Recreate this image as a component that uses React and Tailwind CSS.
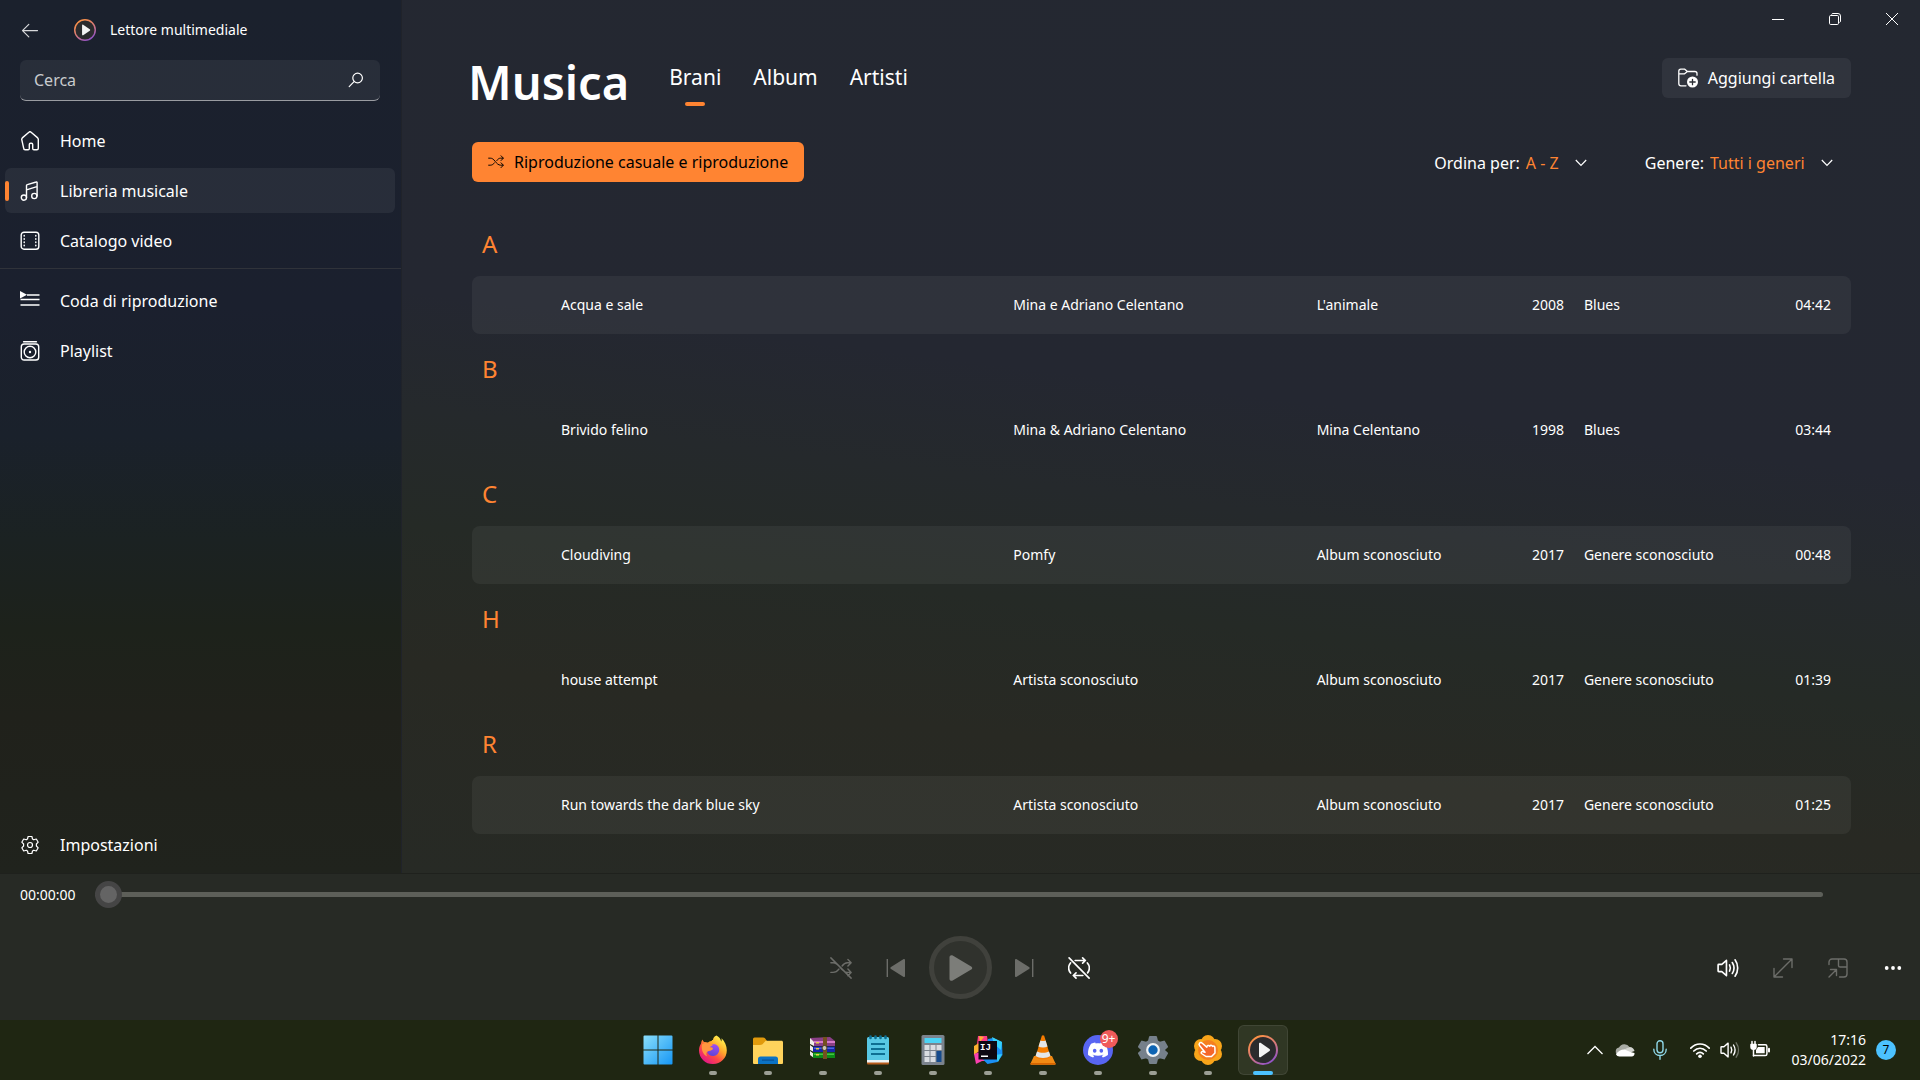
import React from "react";
import { SiDiscord } from "react-icons/si";

const songs = [
  { letter: "A", title: "Acqua e sale", artist: "Mina e Adriano Celentano", album: "L'animale", year: "2008", genre: "Blues", time: "04:42", card: true },
  { letter: "B", title: "Brivido felino", artist: "Mina & Adriano Celentano", album: "Mina Celentano", year: "1998", genre: "Blues", time: "03:44", card: false },
  { letter: "C", title: "Cloudiving", artist: "Pomfy", album: "Album sconosciuto", year: "2017", genre: "Genere sconosciuto", time: "00:48", card: true },
  { letter: "H", title: "house attempt", artist: "Artista sconosciuto", album: "Album sconosciuto", year: "2017", genre: "Genere sconosciuto", time: "01:39", card: false },
  { letter: "R", title: "Run towards the dark blue sky", artist: "Artista sconosciuto", album: "Album sconosciuto", year: "2017", genre: "Genere sconosciuto", time: "01:25", card: true },
];

function Line({ children, size = 20, width = 1.4, className = "" }) {
  return (
    <svg
      width={size}
      height={size}
      viewBox="0 0 20 20"
      fill="none"
      stroke="currentColor"
      strokeWidth={width}
      strokeLinecap="round"
      strokeLinejoin="round"
      className={"shrink-0 " + className}
      aria-hidden="true"
    >
      {children}
    </svg>
  );
}

const HomeIcon = () => (
  <Line>
    <path d="M1.7 8.3c0-.6.2-1 .6-1.4l6.6-5.7c.6-.6 1.5-.6 2.2 0l6.600 5.700c.4.4.6.8.6 1.400v9c0 .8-.6 1.500-1.400 1.500h-3c-.7 0-1.200-.5-1.200-1.200v-4c0-.8-.5-1.300-1.200-1.300h-1c-.7 0-1.200.5-1.200 1.300v4c0 .7-.5 1.200-1.200 1.200h-3c-.8 0-1.400-.7-1.400-1.500z" />
  </Line>
);
const MusicIcon = () => (
  <Line>
    <circle cx="3.9" cy="16.6" r="2.6" />
    <circle cx="14.3" cy="15" r="2.6" />
    <path d="M6.5 16.6V4.6c0-.5.3-.9.8-1L16.2 1c.5-.2.9.1.9.6V15M6.5 8.8l10.4-3.1" />
  </Line>
);
const FilmIcon = () => (
  <Line>
    <rect x="1.2" y="1.2" width="17.6" height="17" rx="2.8" />
    <path d="M4.200 4.500v.6M4.200 7.700v.6M4.200 11v.6M4.200 14.200v.6M15.800 4.500v.6M15.800 7.700v.6M15.800 11v.6M15.800 14.200v.6" strokeWidth="1.500" />
  </Line>
);
const QueueIcon = () => (
  <Line width={1.5}>
    <path d="M0 0l7 3.7L0 7.4z" fill="currentColor" stroke="none" />
    <path d="M7 4h12.5M.5 8.6h19M.5 14h19" strokeLinecap="butt" />
  </Line>
);
const PlaylistIcon = () => (
  <Line>
    <path d="M3.6.8h12.8" />
    <rect x="1.3" y="3" width="17.4" height="16" rx="2.8" />
    <circle cx="10" cy="11" r="5.8" />
    <circle cx="10" cy="11" r="1.2" fill="currentColor" stroke="none" />
  </Line>
);
const GearIcon = () => (
  <Line width={1.2}>
    <path d="M8.1 1.5h3.8l.6 2.5 1.3.8 2.5-.8 1.9 3.2-1.8 1.8v2l1.8 1.8-1.9 3.2-2.5-.8-1.3.8-.6 2.5H8.1L7.500 16l-1.300-.8-2.500.8-1.900-3.200L3.600 11V9L1.800 7.200 3.700 4l2.500.8L7.500 4z" />
    <circle cx="10" cy="10" r="2.5" />
  </Line>
);

function Disc({ size }) {
  const id = "ring" + size;
  return (
    <svg width={size} height={size} viewBox="0 0 30 30" className="shrink-0" aria-hidden="true">
      <defs>
        <linearGradient id={id} x1="0.2" y1="0" x2="0.8" y2="1">
          <stop offset="0" stopColor="#ff9440" />
          <stop offset="0.5" stopColor="#d97a78" />
          <stop offset="1" stopColor="#8a4fd0" />
        </linearGradient>
      </defs>
      <circle cx="15" cy="15" r="14" fill="#2b2b2d" stroke={"url(#" + id + ")"} strokeWidth="2" />
      <path d="M11 8.700c0-.9.800-1.300 1.500-.9l9 6.200c.7.500.7 1.500 0 2l-9 6.200c-.7.400-1.500 0-1.500-.9z" fill="#f4f4f4" />
    </svg>
  );
}

function NavItem({ icon, label, active }) {
  return (
    <a
      href="#"
      aria-current={active ? "page" : undefined}
      className={
        "relative mr-1.5 ml-[5px] flex h-[45px] items-center gap-5 rounded-md pl-[15px] text-base text-white " +
        (active ? "bg-white/6" : "")
      }
    >
      {active && <span className="absolute left-0 h-5 w-1 rounded-full bg-[#ff8432]" />}
      {icon}
      <span>{label}</span>
    </a>
  );
}

function Filter({ id, label, value }) {
  return (
    <div className="relative flex items-center">
      <label htmlFor={id} className="text-white">{label}</label>
      <select id={id} className="cursor-pointer appearance-none bg-transparent pr-10 pl-1.5 text-[#ff8432] outline-none">
        <option>{value}</option>
      </select>
      <svg width="12" height="8" viewBox="0 0 12 8" className="pointer-events-none absolute right-3" fill="none" stroke="#fff" strokeWidth="1.2" aria-hidden="true">
        <path d="M.8 1L6 6.500 11.200 1" />
      </svg>
    </div>
  );
}

function Sidebar() {
  return (
    <aside className="flex w-[402px] shrink-0 flex-col border-r border-[#20232a] bg-[linear-gradient(180deg,#1b212d_0%,#1b202e_35%,#1a212b_50%,#1b2222_62%,#1d221b_72%,#20211b_82%,#20231d_100%)]">
      <div className="flex h-[60px] items-center pl-5">
        <button type="button" aria-label="Indietro" className="text-[#d8d9db]">
          <Line width={1.200}>
            <path d="M2.500 10.600h15M8.800 4.300l-6.300 6.300 6.300 6.300" />
          </Line>
        </button>
        <span className="ml-[34px] flex items-center gap-3.5 text-sm text-white">
          <Disc size={22} />
          Lettore multimediale
        </span>
      </div>
      <div className="mr-[21px] mb-[17px] ml-5 flex h-[41px] items-center rounded-md border-b border-[#9a9ca1] bg-white/6 pr-4 pl-3.5">
        <input
          type="text"
          aria-label="Cerca"
          placeholder="Cerca"
          className="min-w-0 flex-1 bg-transparent text-base text-white outline-none placeholder:text-[#c9cbce]"
        />
        <Line size={16} width={1.500} className="text-white">
          <circle cx="12" cy="7.500" r="6" />
          <path d="M7.600 12L1.500 18.200" />
        </Line>
      </div>
      <nav className="flex flex-1 flex-col gap-[5px]">
        <NavItem icon={<HomeIcon />} label="Home" />
        <NavItem icon={<MusicIcon />} label="Libreria musicale" active />
        <NavItem icon={<FilmIcon />} label="Catalogo video" />
        <hr className="mb-1 border-[#30333a]" />
        <NavItem icon={<QueueIcon />} label="Coda di riproduzione" />
        <NavItem icon={<PlaylistIcon />} label="Playlist" />
        <div className="mt-auto pb-1.5">
          <NavItem icon={<GearIcon />} label="Impostazioni" />
        </div>
      </nav>
    </aside>
  );
}

function WindowButtons() {
  const cls = "flex h-[38px] w-[57px] items-center justify-center text-white";
  return (
    <div className="flex justify-end">
      <button type="button" aria-label="Riduci a icona" className={cls}>
        <svg width="12" height="12" viewBox="0 0 12 12" stroke="currentColor"><path d="M0 6.500h12" /></svg>
      </button>
      <button type="button" aria-label="Ripristina" className={cls}>
        <svg width="12" height="12" viewBox="0 0 12 12" stroke="currentColor" fill="none">
          <rect x=".5" y="2.500" width="9" height="9" rx="1.200" />
          <path d="M2.500 1.500c.3-.6.800-1 1.500-1h5a2.500 2.500 0 0 1 2.500 2.500v5c0 .7-.4 1.200-1 1.500" />
        </svg>
      </button>
      <button type="button" aria-label="Chiudi" className={cls}>
        <svg width="12" height="12" viewBox="0 0 12 12" stroke="currentColor"><path d="M0 0l12 12M12 0L0 12" /></svg>
      </button>
    </div>
  );
}

function SongTable() {
  return (
    <table className="mt-[27px] w-full table-fixed border-separate border-spacing-0 text-left text-sm text-white">
      <colgroup>
        <col className="w-[89px]" />
        <col />
        <col className="w-[22%]" />
        <col className="w-[13%]" />
        <col className="w-[68px]" />
        <col className="w-[170px]" />
        <col className="w-[117px]" />
      </colgroup>
      {songs.map((s) => {
        const bg = s.card ? "bg-white/5" : "";
        return (
          <tbody key={s.letter}>
            <tr>
              <th colSpan={7} scope="rowgroup" className="h-[67px] pt-0.5 pl-[10px] text-2xl font-normal text-[#ff8432]">
                {s.letter}
              </th>
            </tr>
            <tr className="h-[58px]">
              <td className={"rounded-l-lg " + bg} />
              <td className={bg}>{s.title}</td>
              <td className={bg}>{s.artist}</td>
              <td className={bg}>{s.album}</td>
              <td className={"text-right " + bg}>{s.year}</td>
              <td className={"pl-5 whitespace-nowrap " + bg}>{s.genre}</td>
              <td className={"rounded-r-lg pr-5 text-right " + bg}>{s.time}</td>
            </tr>
          </tbody>
        );
      })}
    </table>
  );
}

function Library() {
  return (
    <main className="flex min-w-0 flex-1 flex-col bg-[linear-gradient(187deg,#242831_0%,#242731_45%,#25292c_56%,#252a26_67%,#282923_80%,#272a25_100%)]">
      <WindowButtons />
      <div className="pr-[69px] pb-8 pl-[70px]">
        <header className="mt-[9px] flex h-[62px] items-center">
          <h1 className="-ml-1 pt-2 text-[47px] leading-none font-semibold text-white">Musica</h1>
          <nav className="ml-10 flex gap-8 text-[21px] text-white">
            <a href="#" aria-current="page" className="relative flex justify-center">
              Brani
              <span className="absolute -bottom-3 h-1 w-5 rounded-full bg-[#ff8432]" />
            </a>
            <a href="#">Album</a>
            <a href="#">Artisti</a>
          </nav>
          <button type="button" className="ml-auto flex h-10 items-center gap-2.5 rounded-md bg-white/6 px-4 text-base text-white">
            <Line width={1.300}>
              <path d="M8 17.800H3a2.200 2.200 0 0 1-2.200-2.200V3.200C.8 2 1.700 1.200 2.800 1.200h4l2.600 2.300h7.400c1.300 0 2.200.9 2.200 2.100v1.600M.8 5.800h5.800l2.800-2.200" />
              <circle cx="14.500" cy="14" r="5.500" fill="currentColor" stroke="none" />
              <path d="M14.500 11.300v5.400M11.800 14h5.400" stroke="#2b2e35" />
            </Line>
            Aggiungi cartella
          </button>
        </header>
        <div className="mt-[33px] flex h-10 items-center">
          <button type="button" className="flex h-10 items-center gap-2.5 rounded-md bg-[#ff8432] px-4 text-base text-black">
            <Line size={16} width={1.200}>
              <path d="M.8 5.200h2c2.300 0 4 1.200 6 3.800s4.200 5 7 5h3M.8 14h2c2.300 0 4-1.200 5.300-3M11 8.200c1.300-1.900 2.800-3 4.800-3h3M16.300 2.200l2.900 3-2.900 3M16.300 11l2.900 3-2.900 3" />
            </Line>
            Riproduzione casuale e riproduzione
          </button>
          <div className="ml-auto flex gap-[46px] pt-0.5 pr-1.5 text-base">
            <Filter id="ordina" label="Ordina per:" value="A - Z" />
            <Filter id="genere" label="Genere:" value="Tutti i generi" />
          </div>
        </div>
        <SongTable />
      </div>
    </main>
  );
}

function PlayerButton({ label, children, dim }) {
  return (
    <button
      type="button"
      aria-label={label}
      className={"flex h-12 w-[55px] items-center justify-center " + (dim ? "text-[#6c6d69]" : "text-white")}
    >
      {children}
    </button>
  );
}

function Player() {
  return (
    <footer className="border-t border-[#1f211d] bg-[#272a25] text-white">
      <div className="flex h-[41px] items-center gap-[19px] pr-[97px] pl-5">
        <span className="text-sm">00:00:00</span>
        <input
          type="range"
          aria-label="Posizione"
          min="0"
          max="100"
          defaultValue="0"
          className="h-7 min-w-0 flex-1 appearance-none bg-transparent [&::-webkit-slider-runnable-track]:h-[5px] [&::-webkit-slider-runnable-track]:rounded-full [&::-webkit-slider-runnable-track]:bg-[#5d5f59] [&::-webkit-slider-thumb]:-mt-[11px] [&::-webkit-slider-thumb]:size-[27px] [&::-webkit-slider-thumb]:appearance-none [&::-webkit-slider-thumb]:rounded-full [&::-webkit-slider-thumb]:border-5 [&::-webkit-slider-thumb]:border-[#454545] [&::-webkit-slider-thumb]:bg-[#646464]"
        />
      </div>
      <div className="grid h-[105px] grid-cols-[1fr_auto_1fr] items-center">
        <span />
        <div className="flex items-center">
          <PlayerButton label="Riproduzione casuale" dim>
            <Line size={22} width={1.300}>
              <path d="M.8 5.200h2c2.300 0 4 1.200 6 3.800s4.200 5 7 5h3M.8 14h2c2.300 0 4-1.200 5.300-3M11 8.200c1.300-1.900 2.800-3 4.800-3h3M16.300 2.200l2.900 3-2.900 3M16.300 11l2.900 3-2.900 3M.8.800l18.400 18.400" />
            </Line>
          </PlayerButton>
          <PlayerButton label="Precedente" dim>
            <svg width="20" height="20" viewBox="0 0 20 20" fill="currentColor">
              <rect x=".6" y="1" width="1.400" height="18" />
              <path d="M19 2v16c0 1-.9 1.400-1.700.8L5 11c-.9-.6-.9-1.500 0-2.100L17.300 1.200c.8-.6 1.700-.1 1.700.8z" />
            </svg>
          </PlayerButton>
          <button
            type="button"
            aria-label="Riproduci"
            className="mx-[5px] flex size-[63px] items-center justify-center rounded-full border-5 border-[#40413c] bg-[#30322d] text-[#7c7d79]"
          >
            <svg width="26" height="28" viewBox="0 0 26 28" fill="currentColor" className="ml-0.5">
              <path d="M1.500 3.300c0-1.800 1.700-2.700 3.200-1.800l18.500 10.900c1.400.8 1.400 2.400 0 3.200L4.700 26.500c-1.500.9-3.200 0-3.200-1.800z" />
            </svg>
          </button>
          <PlayerButton label="Successivo" dim>
            <svg width="20" height="20" viewBox="0 0 20 20" fill="currentColor">
              <rect x="18" y="1" width="1.400" height="18" />
              <path d="M1 2v16c0 1 .9 1.400 1.700.8L15 11c.9-.6.9-1.500 0-2.100L2.700 1.200C1.900.6 1 1.100 1 2z" />
            </svg>
          </PlayerButton>
          <PlayerButton label="Ripeti">
            <Line size={22} width={1.500}>
              <path d="M6.500 3.200h9.300M13.300.8l2.500 2.400-2.500 2.400M13.500 16.800H4.800M7.300 14.400l-2.500 2.400 2.500 2.400M2.400 5.300C1 7 .6 8.500.6 10c0 1.700.6 3.300 1.800 4.600M17.600 5.400c1.200 1.300 1.800 2.900 1.800 4.600 0 1.700-.5 3.200-1.600 4.400M1 .800l18.200 18.400" />
            </Line>
          </PlayerButton>
        </div>
        <div className="flex justify-end">
          <PlayerButton label="Volume">
            <Line size={22} width={1.500}>
              <path d="M1 7.300v5.400c0 .4.200.6.600.6h2.800l4.200 3.600V3.100L4.400 6.700H1.600c-.4 0-.6.2-.6.600zM11.400 7.200c.9 1.700.9 3.900 0 5.600M13.900 5c1.900 3 1.900 7 0 10M16.400 2.600c3.200 4.400 3.200 10.400 0 14.800" />
            </Line>
          </PlayerButton>
          <PlayerButton label="Schermo intero" dim>
            <Line width={1.400}>
              <path d="M1 19L19 1M10.500 1H19v8.500M1 10.500V19h8.500" />
            </Line>
          </PlayerButton>
          <PlayerButton label="Mini lettore" dim>
            <Line width={1.400}>
              <path d="M1 6.500V4a3 3 0 0 1 3-3h12a3 3 0 0 1 3 3v12a3 3 0 0 1-3 3h-4.500M10.500 1v6.500c0 1 .5 1.500 1.500 1.500h7M1 19l7.500-7.500M2.500 11.500h6v6" />
            </Line>
          </PlayerButton>
          <PlayerButton label="Altre opzioni">
            <svg width="18" height="4" viewBox="0 0 18 4" fill="currentColor">
              <circle cx="2.700" cy="2" r="1.900" />
              <circle cx="9" cy="2" r="1.900" />
              <circle cx="15.300" cy="2" r="1.900" />
            </svg>
          </PlayerButton>
        </div>
      </div>
    </footer>
  );
}

const Art = ({ children }) => (
  <svg width="30" height="30" viewBox="0 0 30 30" aria-hidden="true">{children}</svg>
);

const StartArt = () => (
  <Art>
    <defs>
      <linearGradient id="win" gradientUnits="userSpaceOnUse" x1="0" y1="0" x2="30" y2="30">
        <stop offset="0" stopColor="#8ce0fb" />
        <stop offset="1" stopColor="#1495f5" />
      </linearGradient>
    </defs>
    <path fill="url(#win)" d="M1.500.5h13v14h-14v-13a1 1 0 0 1 1-1zM15.500.5h13a1 1 0 0 1 1 1v13h-14zM.5 15.500h14v14h-13a1 1 0 0 1-1-1zM15.500 15.500h14v13a1 1 0 0 1-1 1h-13z" />
  </Art>
);
const FirefoxArt = () => (
  <Art>
    <defs>
      <linearGradient id="fox" x1="0.850" y1="0.100" x2="0.200" y2="0.950">
        <stop offset="0" stopColor="#fff44f" />
        <stop offset="0.350" stopColor="#ffa92b" />
        <stop offset="0.650" stopColor="#ff4a45" />
        <stop offset="1" stopColor="#e0148a" />
      </linearGradient>
      <linearGradient id="foxglobe" x1="0.600" y1="0" x2="0.300" y2="1">
        <stop offset="0" stopColor="#a04df2" />
        <stop offset="1" stopColor="#5b45d6" />
      </linearGradient>
    </defs>
    <path fill="url(#fox)" d="M18.500.5c2.700 1.300 4.100 3.700 4.700 6 0 0 .8-1.300.3-3.300 3.300 3 5.300 7.500 5.300 12A13.700 13.700 0 0 1 15 29 13.700 13.700 0 0 1 1 15.500c0-3.600 1.200-5.700 2-6.700.1-1.500.6-3 1.500-4.300.3 1 .9 1.900 1.600 2.600 1.200-.2 2.600 0 3.800.5C12 5.500 14.500 6 15 5.500 14.700 3.300 16.300 1.200 18.500.5z" />
    <path fill="url(#foxglobe)" d="M14.500 9.500c3.700-1 6.800 1.700 6.800 5.700a6.300 6.300 0 0 1-12.500.6c.8.600 2.700.4 3.700-.4 1-.9 1.800-.7 2.300-1.600.4-.9-.6-1.500-2-1.500-1.300-.1-1.200-1.500 1.700-2.800z" />
    <path fill="#ff9640" d="M4 9.500c2-1.800 5-2 7-.5l4 1.300c-1.500.4-2.800 1.500-3.500 2.300 1.800.3 3.600.6 3.200 1.700-.8 1.600-3.200.9-4.800 1.900-1.800 1-2.100 3.600-.5 5.300C5 20 3 14 4 9.500z" />
  </Art>
);
const FolderArt = () => (
  <Art>
    <path fill="#e19a0c" d="M0 4a1.500 1.500 0 0 1 1.500-1.500h8.500c1 0 1.700.3 2.200 1l1.800 2.500v5H0z" />
    <path fill="#ffd35c" d="M0 10c3 0 7.500.3 9.500-.8L12 6.500c.6-.6 1-.7 1.700-.7h14.800c.9 0 1.500.6 1.500 1.500V28a1 1 0 0 1-1 1H1a1 1 0 0 1-1-1z" />
    <path fill="#0b72c4" d="M5 24a2.500 2.500 0 0 1 2.500-2.500h15A2.500 2.500 0 0 1 25 24v5H5z" />
    <path fill="#0a4f93" d="M9 24.500h12v1.200H9z" />
  </Art>
);
const RarArt = () => (
  <Art>
    <path fill="#8a3f86" d="M2 3l20-1 5 4v5H6z" />
    <path fill="#d67bc8" d="M6 6h21v2H6z" />
    <path fill="#f0eee8" d="M2 3l4 4v4l-4-2zM2 10l4 3v4l-4-2zM2 16l4 3v4l-4-3z" />
    <path fill="#1724a8" d="M5 11.500h22V17H5z" />
    <path fill="#4b62e0" d="M6 12.500h20v1.500H6z" />
    <path fill="#0c8a17" d="M5 17.500h22V23H5z" />
    <path fill="#43c442" d="M6 18.500h20V20H6z" />
    <path fill="#74501f" d="M15 2h4v22h-4z" />
    <circle cx="16.500" cy="13" r="2.500" fill="#ccc6b2" stroke="#4a3a20" />
    <path fill="#e7d347" d="M8 7h3v1.500H8zM8 13h3v1.500H8zM8 19h3v1.500H8z" />
  </Art>
);
const NotepadArt = () => (
  <Art>
    <path fill="#b65b1b" d="M4 25h22v3.500a1 1 0 0 1-1 1H5a1 1 0 0 1-1-1z" />
    <path fill="#eef3f5" d="M4 24h22v3.500H4z" />
    <path fill="#58c8e4" d="M4 3.500A1.500 1.500 0 0 1 5.500 2h19A1.500 1.500 0 0 1 26 3.500V25H4z" />
    <path stroke="#0e6f92" strokeWidth="2" d="M8 9h14M8 14h14M8 19h14" />
    <path stroke="#0e6f92" strokeWidth="2.600" strokeLinecap="round" d="M7.500 1.500v1.500M12.500 1.500v1.500M17.500 1.500v1.500M22.500 1.500v1.500" />
  </Art>
);
const CalcArt = () => (
  <Art>
    <rect x="3.500" y="0" width="23" height="30" rx="1.500" fill="#7b838d" />
    <rect x="6.500" y="3" width="17" height="5" rx=".5" fill="#4bd3f5" />
    <path fill="#d9dde2" d="M6.500 10h5v5h-5zM12.500 10h5v5h-5zM18.500 10h5v5h-5zM6.500 16h5v5h-5zM12.500 16h5v5h-5zM6.500 22h5v5h-5zM12.500 22h5v5h-5z" />
    <path fill="#154a8c" d="M18.500 16h5v11h-5z" />
  </Art>
);
const IdeaArt = () => (
  <Art>
    <path fill="#ff3c86" d="M5 1l9 0 2 13-14 4 2-9z" />
    <path fill="#fdb02f" d="M1 11l5-3v8l-5 4zM6 1l5 1-4 5z" />
    <path fill="#fc3fb0" d="M1 19l9-3 8 10-9 0-6 3z" />
    <path fill="#1a8ff5" d="M15 4l5-1 9 4 .5 13-5 7-10 2-5-5z" />
    <path fill="#35d0f7" d="M19 2l10 5-1 8-7-6zM22 20l7-1-4 8z" />
    <rect x="5.500" y="6" width="18.500" height="18.500" fill="#0d0812" />
    <text x="7" y="15" fill="#fff" fontSize="9" fontWeight="700" fontFamily="Liberation Mono, monospace">IJ</text>
    <path fill="#fff" d="M8 20.500h7V22H8z" />
  </Art>
);
const ConeArt = () => (
  <Art>
    <path fill="#f28a14" d="M6 21h18l3.500 7.500a1 1 0 0 1-1 1.300h-23a1 1 0 0 1-1-1.300z" />
    <path fill="#f57c00" d="M13.800.8c.6-.8 1.800-.8 2.400 0L22.500 22c-3 3.300-12 3.300-15 0z" />
    <path fill="#e3e6e8" d="M12.400 5.500c1.600.7 3.600.7 5.200 0l1.900 6c-2.700 1.300-6.300 1.300-9 0zM9 16.500c3.300 1.800 8.700 1.800 12 0l1.500 4.500c-3.700 2.600-11.300 2.600-15 0z" />
    <path fill="#d96400" d="M2.500 28h25v1.500h-25z" />
  </Art>
);
const DiscordArt = () => (
  <span className="flex size-[30px] items-center justify-center rounded-full bg-[#5865f2] text-white">
    <SiDiscord size={20} />
    <span className="absolute top-1 right-1 flex size-[18px] items-center justify-center rounded-full bg-[#f05a5a] text-xs">9+</span>
  </span>
);
const SettingsArt = () => (
  <Art>
    <path fill="#76808b" stroke="#76808b" strokeWidth="2" strokeLinejoin="round" d="M12 2h6l1 4 3 1.800 4-1.200 3 5.200-3 2.700v1l3 2.700-3 5.200-4-1.200L19 24l-1 4h-6l-1-4-3-1.800-4 1.200-3-5.200 3-2.700v-1l-3-2.700 3-5.200 4 1.200L11 6z" />
    <circle cx="15" cy="15" r="5.800" fill="#0e64b3" stroke="#f1f4f6" strokeWidth="2.200" />
  </Art>
);
const TapArt = () => (
  <Art>
    <g fill="#f9a51a">
      <circle cx="15" cy="7" r="7" />
      <circle cx="22" cy="11" r="7" />
      <circle cx="22" cy="19" r="7" />
      <circle cx="15" cy="23" r="7" />
      <circle cx="8" cy="19" r="7" />
      <circle cx="8" cy="11" r="7" />
    </g>
    <circle cx="15" cy="15" r="10" fill="#f57f20" />
    <path
      fill="#f5662a"
      stroke="#fff"
      strokeWidth="1.500"
      strokeLinejoin="round"
      d="M6.500 8.200c.9-1 2-.8 2.800 0l4.500 4c.2-2 1.900-2.300 3-1 .6-1.200 2-1.100 2.700.2 1.200-.8 2.300 0 2.400 1.300l.1 5.300-3.500 3.500h-5.500l-4.500-3c-.9-1.200.3-2.300 1.700-1.800l1.800.500-5.300-6.500c-.8-.900-.9-1.700-.2-2.500z"
    />
  </Art>
);

const apps = [
  { name: "Start", art: <StartArt /> },
  { name: "Firefox", art: <FirefoxArt />, open: true },
  { name: "Esplora file", art: <FolderArt />, open: true },
  { name: "WinRAR", art: <RarArt />, open: true },
  { name: "Blocco note", art: <NotepadArt />, open: true },
  { name: "Calcolatrice", art: <CalcArt />, open: true },
  { name: "IntelliJ IDEA", art: <IdeaArt />, open: true },
  { name: "VLC", art: <ConeArt />, open: true },
  { name: "Discord", art: <DiscordArt />, open: true },
  { name: "Impostazioni di sistema", art: <SettingsArt />, open: true },
  { name: "Giochi", art: <TapArt />, open: true },
  { name: "Lettore multimediale", art: <Disc size={30} />, active: true },
];

function Taskbar() {
  return (
    <div className="grid h-[60px] grid-cols-[1fr_auto_1fr] items-center bg-[#1f2612] text-white">
      <span />
      <div className="flex gap-[5px]">
        {apps.map((a) => (
          <button
            key={a.name}
            type="button"
            aria-label={a.name}
            className={
              "relative flex size-[50px] items-center justify-center rounded-md border " +
              (a.active ? "border-white/8 bg-white/8" : "border-transparent")
            }
          >
            {a.art}
            {a.open && <span className="absolute -bottom-px h-1 w-2 rounded-full bg-[#9b9e94]" />}
            {a.active && <span className="absolute -bottom-px h-1 w-5 rounded-full bg-[#4cc2ff]" />}
          </button>
        ))}
      </div>
      <div className="flex items-center justify-end pr-6">
        <button type="button" aria-label="Mostra icone nascoste" className="mr-3">
          <svg width="16" height="10" viewBox="0 0 16 10" fill="none" stroke="#fff" strokeWidth="1.300"><path d="M.5 9L8 1.500 15.500 9" /></svg>
        </button>
        <button type="button" aria-label="OneDrive" className="mr-[18px]">
          <svg width="20" height="14" viewBox="0 0 20 14">
            <path fill="#a9aba5" d="M4.200 12.500A4 4 0 0 1 4 4.600 6 6 0 0 1 14.500 4L9 9z" />
            <path fill="#d4d5d1" d="M9 6.500l5.500-2.600c2.800 0 4.500 1.700 5 4L14 10z" />
            <path fill="#fff" d="M1 11.500C3 8 6.500 6.300 9.500 6.500l6 2.500 4 1c.4 1.800-1 3.500-2.800 3.500H4.300A4 4 0 0 1 1 11.500z" />
          </svg>
        </button>
        <button type="button" aria-label="Microfono" className="mr-[23px]">
          <svg width="14" height="20" viewBox="0 0 14 20" fill="none" stroke="#8fd8e8" strokeWidth="1.400" strokeLinecap="round">
            <rect x="4" y=".8" width="6" height="12" rx="3" />
            <path d="M.8 9.200c0 3.800 2.700 6.300 6.200 6.300s6.200-2.500 6.200-6.300M7 15.500v3.700" />
          </svg>
        </button>
        <button type="button" aria-label="Rete, volume e batteria" className="mr-[22px] flex items-center gap-2.5">
          <Line width={1.700}>
            <path d="M.8 8.200c5.200-5.600 13.200-5.600 18.400 0M3.800 11c3.600-3.700 8.800-3.700 12.400 0M6.700 13.800c2-2 4.600-2 6.600 0" />
            <circle cx="10" cy="16.300" r="1.800" fill="currentColor" stroke="none" />
          </Line>
          <Line width={1.400}>
            <path d="M1 7.300v5.400c0 .4.200.6.600.6h2.300l4.200 3.600V3.100L3.900 6.700H1.600c-.4 0-.6.2-.6.600zM11 7.200c.9 1.700.9 3.900 0 5.600M13.500 5c1.900 3 1.900 7 0 10" />
            <path d="M16.200 2.800c3 4.300 3 10.100 0 14.400" opacity=".35" />
          </Line>
          <Line width={1.500}>
            <path d="M1 4.500h5v2.300a2.500 2.500 0 0 1-5 0z" fill="currentColor" />
            <path d="M2 1.500v3M5 1.500v3M3.500 9v7" />
            <path d="M8.500 4.700h6.700c1 0 1.700.7 1.700 1.700v7.500c0 1-.7 1.700-1.700 1.700H3.500" />
            <path d="M8 7h6.700v6.300H6V10z" fill="currentColor" stroke="none" />
            <path d="M19 8.800v2.800" strokeWidth="2" />
          </Line>
        </button>
        <button type="button" className="flex items-center gap-2.5 text-right text-sm/5">
          <span>
            17:16
            <br />
            03/06/2022
          </span>
          <span className="flex size-5 items-center justify-center rounded-full bg-[#4cc2ff] text-xs text-black">7</span>
        </button>
      </div>
    </div>
  );
}

export default function App() {
  return (
    <div className="flex min-h-screen flex-col bg-[#272a25] font-['Noto_Sans','Open_Sans',sans-serif]">
      <div className="flex flex-1">
        <Sidebar />
        <Library />
      </div>
      <Player />
      <Taskbar />
    </div>
  );
}
